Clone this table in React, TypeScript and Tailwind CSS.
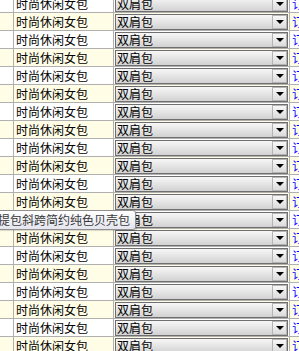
import { memo } from "react";

const ROWS = Array.from({ length: 20 }, (_, i) => i);

function DropArrow() {
  return (
    <svg width="8" height="4" viewBox="0 0 8 4" aria-hidden="true">
      <path d="M0 0h8L4 4z" fill="#000" />
    </svg>
  );
}

const FakeSelect = memo(function FakeSelect({ value }: { value: string }) {
  return (
    <div className="flex h-[16px] w-full items-stretch border border-[#6f6f6f] bg-linear-to-b from-[#f7f7f7] to-[#d2d2d2]">
      <span className="flex-1 overflow-hidden whitespace-nowrap pl-[1px] text-[12px] leading-[14px] text-black">
        {value}
      </span>
      <span className="flex w-[15px] shrink-0 items-center justify-center border border-[#b4b4b4] bg-linear-to-b from-[#f8f8f8] to-[#dcdcdc]">
        <DropArrow />
      </span>
    </div>
  );
});

function Row({ index }: { index: number }) {
  const bg = index % 2 === 1 ? "bg-[#fffde6]" : "bg-white";
  return (
    <div className={`flex h-[18px] border-b border-[#b0b0b0] ${bg}`}>
      <div className="w-[14px] shrink-0 border-r border-[#b0b0b0]" />
      <div className="flex w-[100px] shrink-0 items-center border-r border-[#b0b0b0] pl-[2px] text-[12px] text-black">
        时尚休闲女包
      </div>
      <div className="flex w-[176px] shrink-0 items-center border-r border-[#b0b0b0] pl-[1px] pr-[1px]">
        <FakeSelect value="双肩包" />
      </div>
      <div className="flex flex-1 items-center overflow-hidden pl-[2px] text-[12px] text-[#0000ff]">
        订
      </div>
    </div>
  );
}

export default function App() {
  return (
    <div
      className="relative h-[351px] w-[299px] overflow-hidden bg-white"
      style={{ fontFamily: '"Noto Sans CJK SC", "Noto Sans", sans-serif' }}
    >
      <div className="-mt-[5px]">
        {ROWS.map((i) => (
          <Row key={i} index={i} />
        ))}
      </div>

      <div className="absolute left-[-10px] top-[210px] flex h-[20px] w-[146px] items-center justify-end overflow-hidden rounded-[3px] border border-[#8f8f8f] bg-linear-to-b from-white to-[#e4e5ee] pr-[5px] shadow-[1px_1px_1px_rgba(0,0,0,0.15)]">
        <span className="whitespace-nowrap text-[12px] text-[#3a3a3a]">
          手提包斜跨简约纯色贝壳包
        </span>
      </div>
    </div>
  );
}
